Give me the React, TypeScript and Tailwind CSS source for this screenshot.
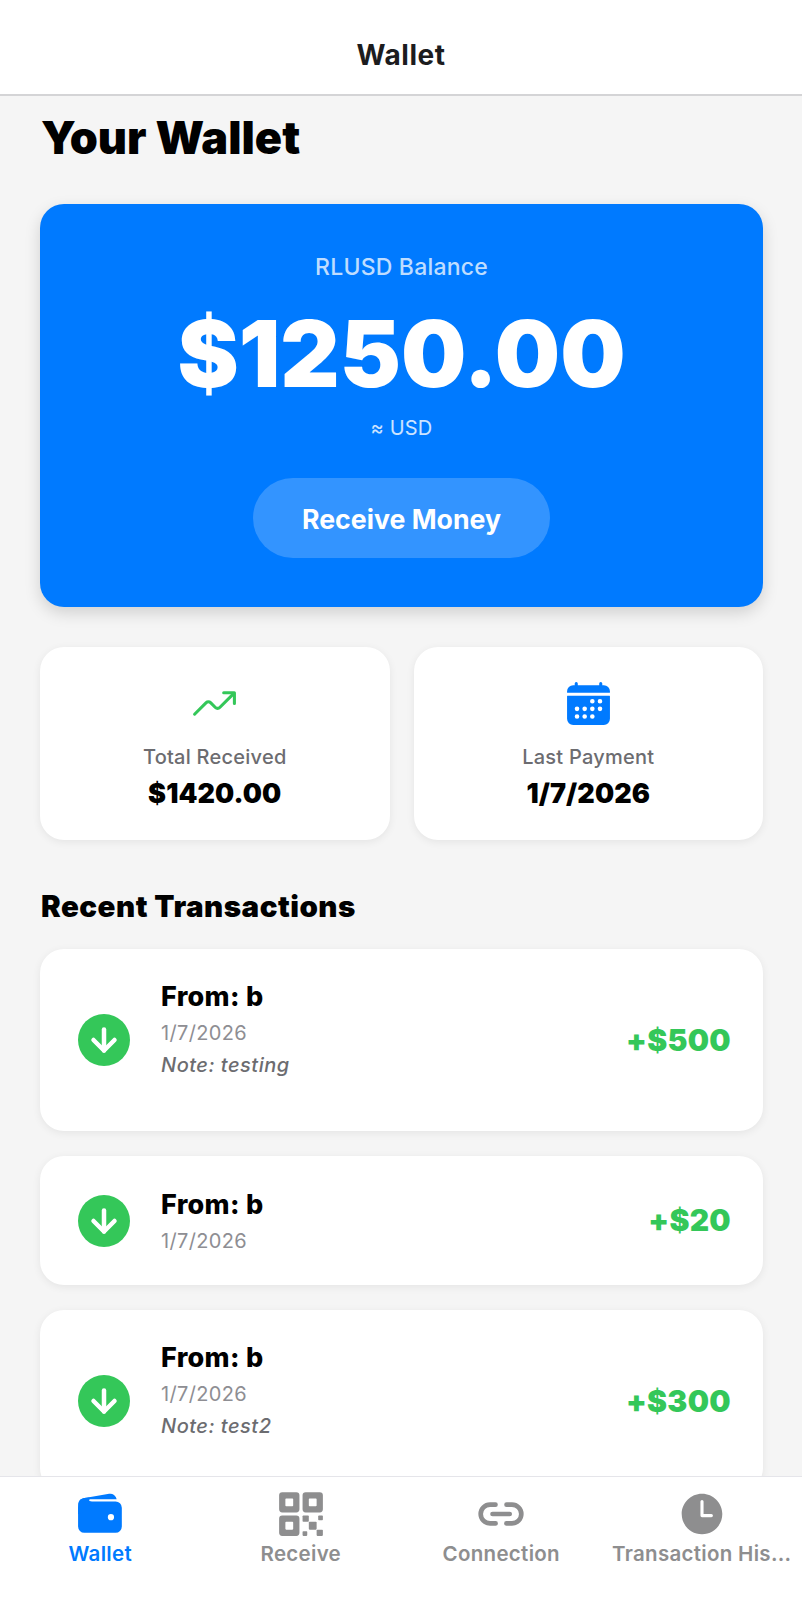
import { ArrowDown } from "lucide-react"
import { IoCalendar, IoLink, IoQrCode, IoTime, IoTrendingUpOutline, IoWallet } from "react-icons/io5"
import type { ReactNode } from "react"

type Tx = { amount: string; note?: string }

const txs: Tx[] = [
  { amount: "+$500", note: "Note: testing" },
  { amount: "+$20" },
  { amount: "+$300", note: "Note: test2" },
]

function StatCard({ icon, label, value }: { icon: ReactNode; label: string; value: string }) {
  return (
    <div className="flex h-[193px] flex-1 flex-col items-center rounded-[24px] bg-white pt-[32px] shadow-[0_2px_8px_rgba(0,0,0,0.07)]">
      <div className="flex h-[49px] items-center justify-center">{icon}</div>
      <p className="mt-[17px] text-[20px] leading-[24px] font-medium tracking-[0.25px] text-[#6c6c70]">{label}</p>
      <p className="mt-[7px] text-[27px] leading-[36px] font-black tracking-[0.1px] text-black">{value}</p>
    </div>
  )
}

function TxRow({ amount, note }: Tx) {
  return (
    <div
      className={`flex shrink-0 items-center rounded-[24px] bg-white pr-[32px] pl-[38px] shadow-[0_2px_8px_rgba(0,0,0,0.07)] ${
        note ? "h-[182px]" : "h-[129px]"
      }`}
    >
      <div className="flex h-[52px] w-[52px] shrink-0 items-center justify-center rounded-full bg-[#34c759]">
        <ArrowDown size={36} strokeWidth={3} className="text-white" />
      </div>
      <div className={`ml-[31px] flex-1 ${note ? "pb-[20px]" : "pt-[3px]"}`}>
        <p className="text-[27px] leading-[36px] font-extrabold tracking-[0.3px] text-black">From: b</p>
        <p className="mt-[2px] text-[20px] leading-[32px] tracking-[0.35px] text-[#8e8e93]">1/7/2026</p>
        {note && <p className="text-[20px] leading-[32px] font-medium tracking-[0.5px] text-[#6c6c70] italic">{note}</p>}
      </div>
      <p className="text-[30px] font-black tracking-[0.3px] text-[#34c759]">{amount}</p>
    </div>
  )
}

function TabItem({ icon, label, active }: { icon: ReactNode; label: string; active?: boolean }) {
  return (
    <div className="flex min-w-0 flex-1 flex-col items-center">
      <div className="flex h-[50px] items-center justify-center">{icon}</div>
      <p
        className={`mt-[1px] w-full text-center text-[20.5px] leading-[28px] font-semibold tracking-[0.3px] whitespace-nowrap ${
          active ? "text-[#007aff]" : "text-[#8e8e8f]"
        }`}
      >
        {label}
      </p>
    </div>
  )
}

export default function App() {
  return (
    <div className="flex h-[1600px] w-[802px] flex-col overflow-hidden bg-[#f5f5f5] font-['Inter',sans-serif]">
      <header className="flex h-[96px] shrink-0 items-center justify-center border-b-2 border-[#d4d4d6] bg-white pt-[16px]">
        <h1 className="text-[28px] font-bold tracking-[0.5px] text-[#1c1c1e]">Wallet</h1>
      </header>

      <main className="min-h-0 flex-1 overflow-hidden pr-[39px] pl-[40px]">
        <h2 className="mt-[13px] pl-[1px] text-[45px] leading-[58px] font-black text-black">Your Wallet</h2>

        <section className="mt-[37px] flex h-[403px] flex-col items-center rounded-[24px] bg-[#007aff] pt-[48px] shadow-[0_6px_16px_rgba(0,0,0,0.15)]">
          <p className="text-[23px] leading-[30px] font-medium tracking-[0.2px] text-white/75">RLUSD Balance</p>
          <p className="mt-[16px] text-[92px] leading-[112px] font-black text-white">$1250.00</p>
          <p className="mt-[4px] text-[20px] leading-[28px] tracking-[0.2px] text-white/80">≈ USD</p>
          <button
            type="button"
            className="mt-[36px] h-[80px] w-[297px] rounded-full bg-white/20 pt-[2px] text-[26.7px] font-bold text-white"
          >
            Receive Money
          </button>
        </section>

        <div className="mt-[40px] flex gap-[24px]">
          <StatCard icon={<IoTrendingUpOutline size={49} className="text-[#34c759]" />} label="Total Received" value="$1420.00" />
          <StatCard icon={<IoCalendar size={49} className="text-[#007aff]" />} label="Last Payment" value="1/7/2026" />
        </div>

        <h3 className="mt-[46px] pl-[1px] text-[29.5px] leading-[40px] font-black tracking-[0.5px] text-black">Recent Transactions</h3>

        <div className="mt-[23px] flex flex-col gap-[25px]">
          {txs.map((tx, i) => (
            <TxRow key={i} {...tx} />
          ))}
        </div>
      </main>

      <nav className="flex h-[124px] shrink-0 border-t border-[#e5e5ea] bg-white pt-[12px]">
        <TabItem icon={<IoWallet size={50} className="text-[#007aff]" />} label="Wallet" active />
        <TabItem icon={<IoQrCode size={50} className="text-[#8e8e8f]" />} label="Receive" />
        <TabItem icon={<IoLink size={50} className="text-[#8e8e8f]" />} label="Connection" />
        <TabItem icon={<IoTime size={50} className="text-[#8e8e8f]" />} label="Transaction His..." />
      </nav>
    </div>
  )
}
